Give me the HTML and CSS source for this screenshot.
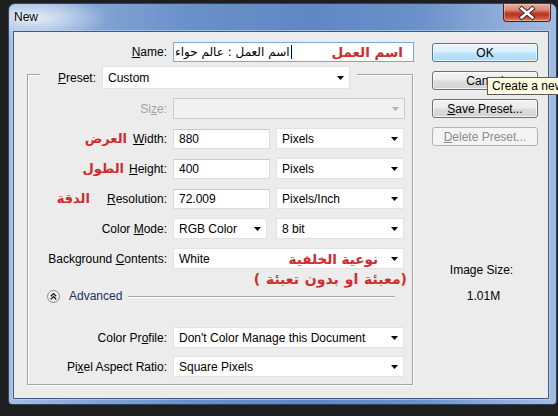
FILE: index.html
```html
<!DOCTYPE html>
<html>
<head>
<meta charset="utf-8">
<title>New</title>
<link rel="stylesheet" href="styles.css">
</head>
<body>
<div class="window">
  <div class="titlebar">
    <span class="title">New</span>
    <div class="close">
      <svg width="47" height="18" viewBox="0 0 47 18">
        <path d="M18 4.5 L29 13.5 M29 4.5 L18 13.5" stroke="#3b2a28" stroke-width="4.6" stroke-linecap="square"/>
        <path d="M18 4.5 L29 13.5 M29 4.5 L18 13.5" stroke="#ffffff" stroke-width="2.6" stroke-linecap="square"/>
      </svg>
    </div>
  </div>
  <div class="frame">
    <div class="client">
      <div class="form">
        <div class="name-row">
          <span class="lbl"><span><u>N</u>ame:</span></span>
          <div class="textbox name-box">
            <span class="val" dir="rtl">اسم العمل : عالم حواء</span><span class="caret"></span>
            <span class="note note-name">اسم العمل</span>
          </div>
        </div>
        <div class="group">
          <div class="preset-row">
            <span class="plbl"><u>P</u>reset:</span>
            <div class="sel w-preset"><span class="stext">Custom</span><svg class="arr" width="7" height="4" viewBox="0 0 7 4"><path d="M0 0H7L3.5 4Z"/></svg></div>
          </div>
          <div class="row row-size">
            <span class="lbl dis"><span>Si<u>z</u>e:</span></span>
            <div class="sel disabled w-size"><span class="stext"></span><svg class="arr" width="7" height="4" viewBox="0 0 7 4"><path d="M0 0H7L3.5 4Z"/></svg></div>
          </div>
          <div class="row">
            <span class="lbl"><span class="note note-w">العرض</span><span><u>W</u>idth:</span></span>
            <div class="textbox w-num">880</div>
            <div class="sel w-unit"><span class="stext">Pixels</span><svg class="arr" width="7" height="4" viewBox="0 0 7 4"><path d="M0 0H7L3.5 4Z"/></svg></div>
          </div>
          <div class="row">
            <span class="lbl"><span class="note note-h">الطول</span><span><u>H</u>eight:</span></span>
            <div class="textbox w-num">400</div>
            <div class="sel w-unit"><span class="stext">Pixels</span><svg class="arr" width="7" height="4" viewBox="0 0 7 4"><path d="M0 0H7L3.5 4Z"/></svg></div>
          </div>
          <div class="row">
            <span class="lbl"><span class="note note-r">الدقة</span><span><u>R</u>esolution:</span></span>
            <div class="textbox w-num">72.009</div>
            <div class="sel w-unit"><span class="stext">Pixels/Inch</span><svg class="arr" width="7" height="4" viewBox="0 0 7 4"><path d="M0 0H7L3.5 4Z"/></svg></div>
          </div>
          <div class="row">
            <span class="lbl"><span>Color <u>M</u>ode:</span></span>
            <div class="sel w-mode"><span class="stext">RGB Color</span><svg class="arr" width="7" height="4" viewBox="0 0 7 4"><path d="M0 0H7L3.5 4Z"/></svg></div>
            <div class="sel w-unit gap9"><span class="stext">8 bit</span><svg class="arr" width="7" height="4" viewBox="0 0 7 4"><path d="M0 0H7L3.5 4Z"/></svg></div>
          </div>
          <div class="row">
            <span class="lbl"><span>Background <u>C</u>ontents:</span></span>
            <div class="sel w-full"><span class="stext">White</span><svg class="arr" width="7" height="4" viewBox="0 0 7 4"><path d="M0 0H7L3.5 4Z"/></svg>
              <span class="note note-bg">نوعية الخلفية</span>
            </div>
          </div>
          <div class="note-line"><span class="note note-paren">( معبئة او بدون تعبئة)</span></div>
          <div class="adv-row">
            <span class="adv-icon">
              <svg width="13" height="13" viewBox="0 0 13 13"><path d="M3.8 6.2 L6.5 3.6 L9.2 6.2 M3.8 9.2 L6.5 6.6 L9.2 9.2" fill="none" stroke="#111" stroke-width="1.3"/></svg>
            </span>
            <span class="adv-text">Advanced</span>
            <span class="adv-line"></span>
          </div>
          <div class="row row-profile">
            <span class="lbl"><span>Color Pr<u>o</u>file:</span></span>
            <div class="sel w-full"><span class="stext">Don't Color Manage this Document</span><svg class="arr" width="7" height="4" viewBox="0 0 7 4"><path d="M0 0H7L3.5 4Z"/></svg></div>
          </div>
          <div class="row row-pixel">
            <span class="lbl"><span>Pi<u>x</u>el Aspect Ratio:</span></span>
            <div class="sel w-full"><span class="stext">Square Pixels</span><svg class="arr" width="7" height="4" viewBox="0 0 7 4"><path d="M0 0H7L3.5 4Z"/></svg></div>
          </div>
        </div>
      </div>
      <div class="side">
        <div class="btn btn-default">OK</div>
        <div class="btn">Cancel</div>
        <div class="btn"><span><u>S</u>ave Preset...</span></div>
        <div class="btn btn-disabled"><span><u>D</u>elete Preset...</span></div>
        <div class="info-label">Image Size:</div>
        <div class="info-value">1.01M</div>
      </div>
    </div>
  </div>
</div>
<div class="tooltip">Create a new document</div>
</body>
</html>
```
FILE: styles.css
```css
* { box-sizing: border-box; }
html, body { margin: 0; padding: 0; }
body {
  width: 558px;
  height: 416px;
  overflow: hidden;
  position: relative;
  background: #1e1e1e;
  font-family: "Liberation Sans", "DejaVu Sans", sans-serif;
  font-size: 12px;
  color: #000;
}
u { text-decoration: underline; text-underline-offset: 1px; }

.window {
  margin: 3px 0 0 8px;
  width: 549px;
  height: 402px;
  border: 1px solid #2f4568;
  border-radius: 7px 7px 4px 4px;
  background:
    radial-gradient(ellipse 70px 22px at 30px 14px, rgba(235,242,252,0.85), rgba(235,242,252,0) 100%),
    linear-gradient(to right, #a7bee2 0%, #86a6d6 14%, #6a91c9 32%, #5f87c2 55%, #6b91c9 75%, #93b0db 92%, #a3bce0 100%);
  display: flex;
  flex-direction: column;
}
.titlebar {
  height: 27px;
  display: flex;
  justify-content: space-between;
  align-items: flex-start;
  padding: 0 5px 0 5px;
}
.title {
  margin-top: 6px;
  line-height: 14px;
  color: #000;
  text-shadow: 0 0 6px rgba(255,255,255,0.9), 0 0 3px rgba(255,255,255,0.8);
}
.close {
  width: 48px;
  height: 18px;
  border: 1px solid #4a1d16;
  border-top: none;
  border-radius: 0 0 4px 4px;
  background: linear-gradient(to bottom, #e6ada2 0%, #d68a7c 35%, #c44a36 50%, #b83420 62%, #cf5a44 85%, #e08a77 100%);
  box-shadow: inset 0 0 0 1px rgba(255,210,200,0.45);
  display: flex;
}
.close svg { display: block; }
.frame {
  flex: 1;
  padding: 0 7px 5px 4px;
  display: flex;
}
.client {
  flex: 1;
  border: 1px solid #3f5a82;
  box-shadow: 0 0 0 1px rgba(200,215,238,0.6);
  background: #ececec;
  display: flex;
}

/* form column */
.form {
  width: 413px;
  padding: 10px 0 0 13px;
}
.name-row {
  display: flex;
  align-items: center;
  height: 20px;
}
.name-row .lbl { width: 140px; }
.lbl {
  width: 139px;
  margin-right: 6px;
  display: flex;
  justify-content: flex-end;
  align-items: center;
  white-space: nowrap;
}
.dis { color: #a3a3a3; }

.textbox {
  height: 20px;
  background: #fff;
  border: 1px solid #dcdcdc;
  border-top-color: #c9c9c9;
  display: flex;
  align-items: center;
  padding-left: 5px;
  white-space: nowrap;
}
.name-box {
  width: 241px;
  border: 1px solid #7fa6d3;
  padding-left: 1px;
  position: relative;
}
.val { font-family: "DejaVu Sans", sans-serif; font-size: 12px; }
.caret {
  width: 1px;
  height: 14px;
  background: #000;
  margin-left: 1px;
}
.w-num { width: 97px; margin-right: 6px; }

.sel {
  height: 21px;
  background: #fff;
  border: 1px solid #e2e2e2;
  display: flex;
  align-items: center;
  padding-left: 5px;
  position: relative;
  white-space: nowrap;
}
.stext { flex: 1; }
.arr { margin-right: 5px; fill: #000; display: block; }
.sel.disabled { background: #f1f1f1; border-color: #cbcbcb; }
.sel.disabled .arr { fill: #b0b0b0; }
.w-preset { width: 248px; height: 23px; }
.w-size { width: 232px; }
.w-unit { width: 128px; }
.w-mode { width: 94px; }
.gap9 { margin-left: 9px; }
.w-full { width: 231px; }

.group {
  margin-top: 12px;
  width: 386px;
  border: 1px solid #a3a3a3;
  box-shadow: inset 1px 1px 0 #fff, 1px 1px 0 #fff;
  padding-bottom: 7px;
  display: flex;
  flex-direction: column;
}
.preset-row {
  margin: -9px 0 0 12px;
  align-self: flex-start;
  height: 23px;
  padding: 0 7px 0 18px;
  background: #ececec;
  display: flex;
  align-items: center;
}
.plbl { width: 44px; }
.row {
  display: flex;
  align-items: center;
  height: 21px;
  margin-top: 9px;
}
.row-profile { margin-top: 24px; }
.row-pixel { margin-top: 8px; }

.note {
  font-family: "DejaVu Sans", sans-serif;
  font-weight: bold;
  font-size: 13px;
  color: #cf2c2c;
  white-space: nowrap;
  line-height: 16px;
}
.note-w { margin-right: 6px; }
.note-h { margin-right: 5px; }
.note-r { margin-right: 17px; }
.note-name {
  position: absolute;
  right: 10px;
  top: 1px;
  font-size: 13.5px;
}
.note-bg {
  position: absolute;
  right: 25px;
  top: 2px;
  font-size: 13.5px;
}
.note-paren {
  font-size: 14px;
  word-spacing: 1px;
}
.note-line {
  margin-top: 2px;
  height: 16px;
  display: flex;
  justify-content: flex-end;
  padding-right: 5px;
}

.adv-row {
  margin-top: 2px;
  height: 14px;
  display: flex;
  align-items: center;
  padding-left: 19px;
}
.adv-icon {
  width: 13px;
  height: 13px;
  border-radius: 50%;
  border: 1px solid #8e8e8e;
  background: radial-gradient(circle at 50% 35%, #ffffff 0%, #f2f2f2 50%, #d4d4d4 100%);
  display: flex;
  align-items: center;
  justify-content: center;
}
.adv-icon svg { display: block; margin: -1px; }
.adv-text {
  margin-left: 9px;
  color: #1b2f56;
}
.adv-line {
  flex: 1;
  height: 2px;
  margin: 1px 17px 0 6px;
  border-top: 1px solid #a8a8a8;
  border-bottom: 1px solid #fff;
}

/* side column */
.side {
  margin-left: 5px;
  width: 106px;
  padding-top: 11px;
  display: flex;
  flex-direction: column;
}
.btn {
  height: 19px;
  margin-bottom: 9px;
  border: 1px solid #707070;
  border-radius: 3px;
  background: linear-gradient(to bottom, #f3f3f3 0%, #ebebeb 48%, #dddddd 52%, #d2d2d2 100%);
  box-shadow: inset 0 0 0 1px rgba(255,255,255,0.7);
  display: flex;
  align-items: center;
  justify-content: center;
  white-space: nowrap;
}
.btn-default {
  border-color: #3c7fb1;
  background: linear-gradient(to bottom, #eaf5fd 0%, #d9eefc 48%, #bee4fb 52%, #a9d9f9 100%);
}
.btn-disabled {
  margin-bottom: 0;
  color: #8d8d8d;
  border-color: #adb2b5;
  background: #f4f4f4;
  box-shadow: none;
}
.info-label {
  margin-top: 117px;
  line-height: 14px;
  text-align: center;
  padding-right: 7px;
}
.info-value {
  margin-top: 12px;
  line-height: 14px;
  text-align: center;
  padding-right: 3px;
}

.tooltip {
  position: absolute;
  left: 487px;
  top: 77px;
  height: 18px;
  padding: 0 3px 0 4px;
  line-height: 16px;
  background: #ffffe1;
  border: 1px solid #5a5a5a;
  white-space: nowrap;
  color: #000;
}
```
